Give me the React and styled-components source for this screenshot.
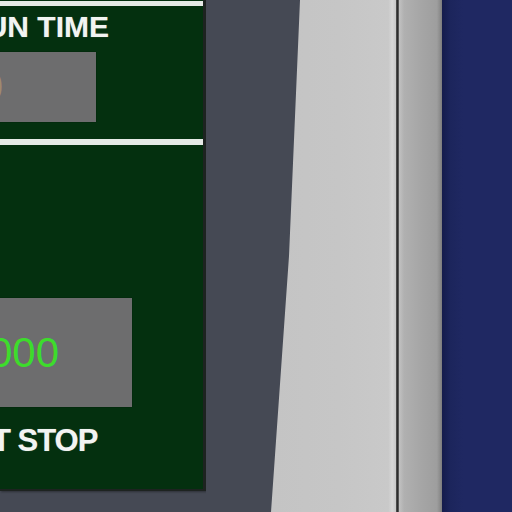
import React from "react";
import styled, { createGlobalStyle } from "styled-components";

const Global = createGlobalStyle`
  html, body { margin: 0; padding: 0; overflow: hidden; background: #454954; }
  #root { width: 512px; height: 512px; }
`;

const Screen = styled.div`
  display: flex;
  flex-direction: row;
  width: 512px;
  height: 512px;
  overflow: hidden;
  background: #454954;
  font-family: "Liberation Sans", Arial, sans-serif;
`;

const Panel = styled.section`
  flex: 0 0 auto;
  width: 203px;
  height: 489px;
  align-self: flex-start;
  display: flex;
  flex-direction: column;
  overflow: hidden;
  background: #04300f;
  border-right: 3px solid #1d2320;
  border-bottom: 2px solid #1d2320;
  box-shadow: 1px 1px 2px rgba(0, 0, 0, 0.35);
`;

const Rule = styled.div`
  flex: 0 0 auto;
  height: ${(p) => p.$h}px;
  margin-top: ${(p) => p.$top}px;
  background: #e6eae6;
`;

const Label = styled.div`
  flex: 0 0 auto;
  margin-top: ${(p) => p.$top}px;
  margin-left: ${(p) => p.$left}px;
  font-size: ${(p) => p.$size || 30}px;
  line-height: 30px;
  font-weight: 700;
  color: #f2f4f2;
  letter-spacing: ${(p) => p.$ls || 0}px;
  white-space: nowrap;
  text-shadow: 0 0 1px rgba(255, 255, 255, 0.4);
`;

const Readout = styled.div`
  flex: 0 0 auto;
  display: flex;
  align-items: center;
  justify-content: flex-end;
  box-sizing: border-box;
  margin-top: ${(p) => p.$top}px;
  margin-left: ${(p) => p.$left}px;
  width: ${(p) => p.$w}px;
  height: ${(p) => p.$h}px;
  padding-right: ${(p) => p.$pr}px;
  background: #6d6d6e;
  box-shadow: 0 0 1px rgba(0, 0, 0, 0.5);
`;

const Digits = styled.span`
  font-size: 42px;
  line-height: 42px;
  font-weight: 400;
  color: ${(p) => p.$color};
  white-space: nowrap;
`;

const Slab = styled.div`
  flex: 0 0 190px;
  height: 512px;
  display: flex;
  background: #454954;
`;

const Face = styled.div`
  flex: 1;
  background: linear-gradient(90deg, #c2c2c2 0%, #c6c6c6 70%, #c9c9c9 96%, #d8d8d8 98%, #c8c8c8 100%);
  clip-path: polygon(94px 0, 100% 0, 100% 100%, 65px 100%, 83px 256px);
`;

const Seam = styled.div`
  flex: 0 0 3px;
  height: 512px;
  background: linear-gradient(90deg, #5a5a5a, #2e2e2e, #6a6a6a);
`;

const Frame = styled.div`
  flex: 0 0 43px;
  height: 512px;
  background: linear-gradient(90deg, #c2c2c2 0%, #b0b0b0 12%, #a6a6a6 50%, #9e9e9e 88%, #8a8a8a 96%, #7c7c7c 100%);
`;

const Cabinet = styled.div`
  flex: 1;
  height: 512px;
  background: linear-gradient(90deg, #151c4c 0%, #1c255c 12%, #1f2862 30%, #1f2862 100%);
`;

export default function App() {
  return (
    <>
      <Global />
      <Screen>
        <Panel>
          <Rule $top={1} $h={5} />
          <Label $top={6} $left={-36}>RUN TIME</Label>
          <Readout $top={10} $left={-60} $w={156} $h={70} $pr={93}>
            <Digits $color="#a08a6e">00</Digits>
          </Readout>
          <Rule $top={17} $h={6} />
          <Readout $top={153} $left={-60} $w={192} $h={109} $pr={73}>
            <Digits $color="#3ddc2c">10000</Digits>
          </Readout>
          <Label $top={19} $left={-67} $size={31} $ls={-1}>LAST STOP</Label>
        </Panel>
        <Slab>
          <Face />
        </Slab>
        <Seam />
        <Frame />
        <Cabinet />
      </Screen>
    </>
  );
}
